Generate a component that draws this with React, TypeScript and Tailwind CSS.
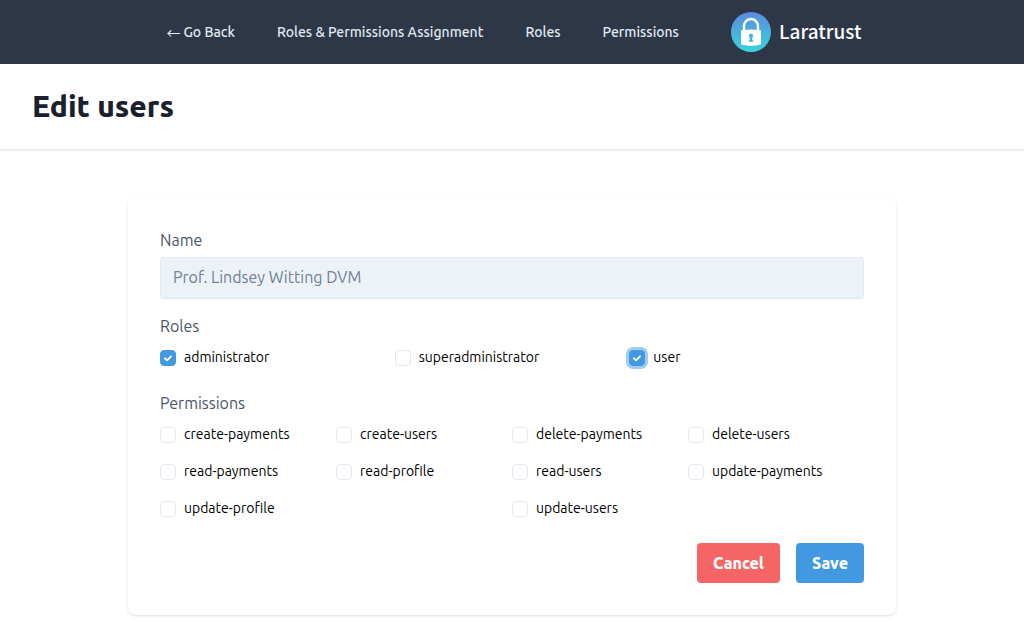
import { useId, useState } from "react";

const navLinks = ["Roles & Permissions Assignment", "Roles", "Permissions"];

const roles = ["administrator", "superadministrator", "user"];

const permissions = [
  "create-payments",
  "create-users",
  "delete-payments",
  "delete-users",
  "read-payments",
  "read-profile",
  "read-users",
  "update-payments",
  "update-profile",
  "update-users",
];

function Logo() {
  return (
    <a href="#laratrust" className="flex items-center gap-2 text-white">
      <svg viewBox="0 0 40 40" className="size-10" aria-hidden="true">
        <defs>
          <linearGradient id="logo-fill" x1="0" y1="0" x2="0" y2="1">
            <stop offset="0" stopColor="#5a8be0" />
            <stop offset="1" stopColor="#3bd3da" />
          </linearGradient>
        </defs>
        <circle cx="20" cy="20" r="20" fill="url(#logo-fill)" />
        <path
          d="M13 20V14a7 7 0 0 1 14 0V20"
          fill="none"
          stroke="#fff"
          strokeWidth="2.4"
        />
        <path
          d="M10 19.2Q10 18.4 10.9 18.3Q20 16.9 29.1 18.3Q30 18.4 30 19.2V31.8Q30 32.6 29.1 32.8Q20 35 10.9 32.8Q10 32.6 10 31.8Z"
          fill="#fff"
        />
        <path
          d="M20 21.8a2 2 0 0 1 1.3 3.6V28.2h.8v1.6h-4.2v-1.6h.8V25.4a2 2 0 0 1 1.3-3.600z"
          fill="#46b4dc"
        />
      </svg>
      <span className="pb-0.5 font-['Noto_Sans_CJK_JP',sans-serif] text-[19px] leading-7 font-medium">
        Laratrust
      </span>
    </a>
  );
}

type CheckProps = { name: string; checked: boolean; focused?: boolean; onToggle: () => void };

function Check({ name, checked, focused = false, onToggle }: CheckProps) {
  const id = useId();
  return (
    <div className="flex items-center gap-2">
      <span className="grid size-4 shrink-0">
        <input
          id={id}
          type="checkbox"
          checked={checked}
          onChange={onToggle}
          className={
            "col-start-1 row-start-1 size-4 appearance-none rounded border border-[#e2e8f0] bg-white outline-none checked:border-[#4299e1] checked:bg-[#4299e1] focus:ring-3 focus:ring-[#4299e1]/50" +
            (focused ? " ring-3 ring-[#4299e1]/50" : "")
          }
        />
        {checked && (
          <svg viewBox="0 0 16 16" className="pointer-events-none col-start-1 row-start-1 size-4" aria-hidden="true">
            <path
              d="M5 8.3l2 2 4-4"
              fill="none"
              stroke="#fff"
              strokeWidth="1.9"
              strokeLinecap="round"
              strokeLinejoin="round"
            />
          </svg>
        )}
      </span>
      <label htmlFor={id} className="text-sm leading-[21px] text-black">
        {name}
      </label>
    </div>
  );
}

export default function App() {
  const [selected, setSelected] = useState<string[]>(["administrator", "user"]);
  const toggle = (name: string) =>
    setSelected((current) =>
      current.includes(name) ? current.filter((item) => item !== name) : [...current, name],
    );

  return (
    <div className="bg-white font-['Ubuntu','Noto_Sans',sans-serif] text-[#4a5568]">
      <nav className="flex h-16 items-center justify-center gap-[42px] bg-[#2d3748] pr-8 pl-9 text-sm font-medium text-[#e2e8f0]">
        <a href="#back" className="flex items-center gap-[3px] whitespace-nowrap hover:text-white">
          <span className="font-['Noto_Sans_CJK_JP',sans-serif] leading-5 font-normal">←</span>
          <span>Go Back</span>
        </a>
        {navLinks.map((link) => (
          <a key={link} href="#nav" className="whitespace-nowrap hover:text-white">
            {link}
          </a>
        ))}
        <div className="pl-2.5">
          <Logo />
        </div>
      </nav>

      <header className="px-8 py-6 shadow-sm">
        <h1 className="text-3xl leading-[37px] font-extrabold text-[#1a202c]">Edit users</h1>
      </header>

      <main className="px-8 pt-12 pb-6">
        <form
          className="mx-auto flex max-w-3xl flex-col rounded-lg p-8 shadow-sm"
          onSubmit={(event) => event.preventDefault()}
        >
          <label htmlFor="name" className="leading-[22px]">
            Name
          </label>
          <input
            id="name"
            readOnly
            value="Prof. Lindsey Witting DVM"
            className="mt-1.5 h-[42px] w-full rounded border border-[#e2e8f0] bg-[#edf2f7] px-3 pb-0.5 text-[#718096] outline-none"
          />

          <fieldset className="mt-4">
            <legend className="leading-[22px]">Roles</legend>
            <div className="mt-2.5 grid grid-cols-3">
              {roles.map((role) => (
                <Check
                  key={role}
                  name={role}
                  checked={selected.includes(role)}
                  focused={role === "user"}
                  onToggle={() => toggle(role)}
                />
              ))}
            </div>
          </fieldset>

          <fieldset className="mt-6">
            <legend className="leading-[22px]">Permissions</legend>
            <div className="mt-2.5 flex flex-wrap gap-y-4">
              {permissions.map((permission) => (
                <div key={permission} className="grow basis-1/4">
                  <Check
                    name={permission}
                    checked={selected.includes(permission)}
                    onToggle={() => toggle(permission)}
                  />
                </div>
              ))}
            </div>
          </fieldset>

          <div className="mt-6 flex justify-end gap-4 font-extrabold text-white">
            <button type="button" className="rounded bg-[#f56565] px-4 py-2 leading-6">
              Cancel
            </button>
            <button type="submit" className="rounded bg-[#4299e1] px-4 py-2 leading-6">
              Save
            </button>
          </div>
        </form>
      </main>
    </div>
  );
}
